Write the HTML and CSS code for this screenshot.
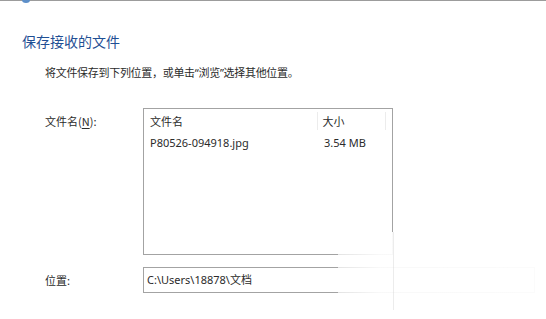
FILE: index.html
```html
<!DOCTYPE html>
<html lang="zh-CN">
<head>
    <meta charset="UTF-8">
    <meta name="viewport" content="width=device-width, initial-scale=1.0">
    <title>保存接收的文件</title>
    <link rel="stylesheet" href="styles.css">
</head>
<body>
    <!-- Top edge of the wizard header -->
    <div class="top-edge">
        <span class="header-icon"></span>
    </div>

    <div class="page">
        <h1 class="main-title">保存接收的文件</h1>
        <p class="hint">将文件保存到下列位置，或单击<span class="q">“</span>浏览<span class="q">”</span>选择其他位置。</p>

        <div class="form">
            <label class="form-label">文件名(<u>N</u>):</label>
            <div class="file-list">
                <div class="list-head">
                    <div class="col col-name">文件名</div>
                    <div class="col col-size">大小</div>
                    <div class="col col-rest"></div>
                </div>
                <div class="list-row">
                    <div class="col col-name">P80526-094918.jpg</div>
                    <div class="col col-size">3.54 MB</div>
                </div>
            </div>

            <label class="form-label">位置:</label>
            <div class="path-input">C:\Users\18878\文档</div>
        </div>
    </div>

    <!-- faded watermark patch over the bottom right -->
    <div class="fade-patch"></div>
</body>
</html>
```

FILE: styles.css
```css
body {
    margin: 0;
    padding: 0;
    background: #fff;
    color: #2b2b2b;
    font-family: "Noto Sans", "Noto Sans CJK SC", sans-serif;
    font-size: 11px;
    width: 546px;
    height: 319px;
    overflow: hidden;
    position: relative;
}

.top-edge {
    height: 0;
    border-top: 1px solid #9c9c9c;
    position: relative;
}

.header-icon {
    position: absolute;
    left: 22px;
    top: -4px;
    width: 8px;
    height: 6px;
    border-radius: 50%;
    background: #5d8fc9;
}

.page {
    padding: 30px 0 0 22px;
}

.main-title {
    margin: 0;
    font-family: "Noto Sans CJK SC", sans-serif;
    font-weight: normal;
    font-size: 14px;
    line-height: 20px;
    color: #1f4f94;
}

.hint {
    margin: 13px 0 0 23px;
    line-height: 16px;
    font-family: "Noto Sans CJK SC", sans-serif;
    letter-spacing: -0.3px;
}

.hint .q {
    font-family: "Noto Sans", sans-serif;
}

.form {
    display: grid;
    grid-template-columns: 98px auto;
    row-gap: 12px;
    margin: 27px 0 0 23px;
    align-items: start;
}

.form-label {
    line-height: 16px;
    padding-top: 5px;
    font-family: "Noto Sans CJK SC", sans-serif;
}

.form-label u {
    text-underline-offset: 2px;
}

.file-list {
    width: 248px;
    height: 145px;
    border: 1px solid #a3a3a3;
}

.list-head,
.list-row {
    display: flex;
}

.list-head {
    height: 24px;
    line-height: 24px;
    font-family: "Noto Sans CJK SC", sans-serif;
}

.list-row {
    line-height: 20px;
}

.col {
    padding-left: 6px;
    box-sizing: border-box;
}

.col-name {
    width: 175px;
}

.col-size {
    width: 69px;
    padding-left: 5px;
}

.list-head .col-name,
.list-head .col-size {
    border-right: 1px solid #ececec;
    margin: 3px 0;
    line-height: 18px;
}

.col-rest {
    flex: 1;
}

.path-input {
    width: 392px;
    height: 26px;
    line-height: 24px;
    box-sizing: border-box;
    border: 1px solid #a3a3a3;
    padding-left: 3px;
}

.fade-patch {
    position: absolute;
    left: 338px;
    top: 232px;
    width: 208px;
    height: 78px;
    background: linear-gradient(to right, rgba(255, 255, 255, 0.7), rgba(255, 255, 255, 0.93) 20%, rgba(255, 255, 255, 0.96));
}

.fade-patch::after {
    content: "";
    position: absolute;
    left: 55px;
    top: 0;
    bottom: 0;
    border-left: 1px solid rgba(200, 200, 200, 0.35);
}
```
